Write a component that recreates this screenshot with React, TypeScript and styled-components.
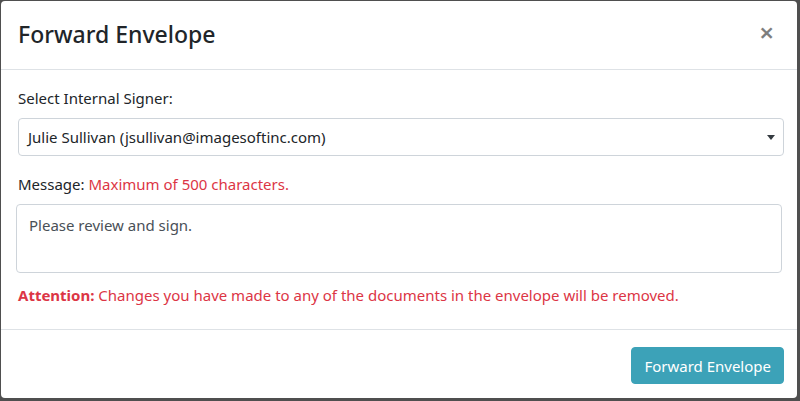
import React from 'react';
import styled, { createGlobalStyle } from 'styled-components';

const GlobalStyle = createGlobalStyle`
  html, body {
    margin: 0;
    padding: 0;
    background: #4f4f4f;
  }
  body {
    font-family: "Noto Sans", "Open Sans", Arial, sans-serif;
    color: #212529;
  }
`;

const Modal = styled.div`
  margin: 1px 0 0 1px;
  width: 796px;
  height: 397px;
  background: #fff;
  border-radius: 4px;
  display: flex;
  flex-direction: column;
  overflow: hidden;
`;

const Header = styled.div`
  height: 69px;
  padding: 0 16px 0 17px;
  display: flex;
  align-items: center;
  justify-content: space-between;
  border-bottom: 1px solid #dee2e6;
  box-sizing: border-box;
`;

const Title = styled.h5`
  margin: 0;
  font-size: 23px;
  font-weight: 500;
  line-height: 1.2;
  color: #212529;
`;

const Close = styled.button`
  border: none;
  background: transparent;
  padding: 0;
  margin-right: 7px;
  margin-top: -6px;
  color: #000;
  opacity: 0.5;
  font-size: 26px;
  font-weight: 600;
  line-height: 1;
  font-family: inherit;
  cursor: pointer;
`;

const Body = styled.div`
  padding: 16px 15px 0 15px;
  flex: 1;
  box-sizing: border-box;
`;

const Label = styled.div<{ $gap?: number }>`
  font-size: 15px;
  line-height: 24px;
  margin-bottom: 8px;
  padding-left: 2px;
  margin-top: ${p => p.$gap ?? 0}px;
`;

const Hint = styled.span`
  color: #dc3545;
`;

const SelectBox = styled.div`
  margin-left: 2px;
  width: 766px;
  height: 38px;
  box-sizing: border-box;
  border: 1px solid #ced4da;
  border-radius: 4px;
  display: flex;
  align-items: center;
  justify-content: space-between;
  padding: 0 8px 0 9px;
  font-size: 15px;
  color: #212529;
`;

const Caret = styled.span`
  width: 0;
  height: 0;
  border-left: 4px solid transparent;
  border-right: 4px solid transparent;
  border-top: 5px solid #343a40;
  margin-top: 1px;
`;

const TextArea = styled.div`
  width: 766px;
  height: 69px;
  box-sizing: border-box;
  border: 1px solid #ced4da;
  border-radius: 4px;
  padding: 9px 12px;
  font-size: 15px;
  line-height: 22px;
  color: #495057;
`;

const Attention = styled.p`
  margin: 10px 0 0 2px;
  font-size: 15px;
  line-height: 24px;
  color: #dc3545;
  strong {
    font-weight: 700;
  }
`;

const Footer = styled.div`
  height: 69px;
  border-top: 1px solid #dee2e6;
  display: flex;
  justify-content: flex-end;
  align-items: flex-start;
  padding: 17px 13px 0 0;
  box-sizing: border-box;
`;

const PrimaryButton = styled.button`
  height: 37px;
  padding: 0 12px;
  background: #3ca2b8;
  border: 1px solid #3ca2b8;
  border-radius: 4px;
  color: #fff;
  font-family: inherit;
  font-size: 15px;
  cursor: pointer;
`;

export default function App() {
  return (
    <>
      <GlobalStyle />
      <Modal>
        <Header>
          <Title>Forward Envelope</Title>
          <Close aria-label="Close">×</Close>
        </Header>
        <Body>
          <Label>Select Internal Signer:</Label>
          <SelectBox>
            <span>Julie Sullivan (jsullivan@imagesoftinc.com)</span>
            <Caret />
          </SelectBox>
          <Label $gap={16}>
            Message: <Hint>Maximum of 500 characters.</Hint>
          </Label>
          <TextArea>Please review and sign.</TextArea>
          <Attention>
            <strong>Attention:</strong> Changes you have made to any of the documents in the envelope will be removed.
          </Attention>
        </Body>
        <Footer>
          <PrimaryButton>Forward Envelope</PrimaryButton>
        </Footer>
      </Modal>
    </>
  );
}
